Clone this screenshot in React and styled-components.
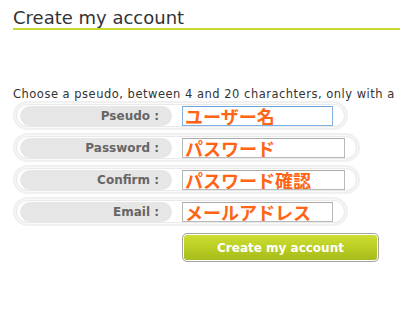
import React from "react";
import styled, { createGlobalStyle } from "styled-components";

const GlobalStyle = createGlobalStyle`
  html, body {
    margin: 0;
    padding: 0;
    background: #ffffff;
    overflow: hidden;
  }
  body {
    font-family: "DejaVu Sans", Verdana, sans-serif;
  }
`;

const Page = styled.div`
  width: 400px;
  height: 326px;
  padding: 7px 0 0 13px;
  box-sizing: border-box;
  overflow: hidden;
`;

const Title = styled.h1`
  margin: 0;
  font-size: 18px;
  line-height: 21px;
  font-weight: normal;
  color: #333333;
  border-bottom: 2px solid #c9da2a;
`;

const Hint = styled.p`
  margin: 57px 0 0 0;
  font-size: 11.5px;
  letter-spacing: 0.5px;
  line-height: 14px;
  color: #333333;
  white-space: nowrap;
  overflow: hidden;
`;

const Fields = styled.div`
  display: flex;
  flex-direction: column;
  align-items: flex-start;
  gap: 3px;
`;

const Row = styled.div`
  display: inline-flex;
  align-items: center;
  height: 29px;
  box-sizing: border-box;
  border: 2px solid #f0f0f0;
  box-shadow: inset 0 0 0 1px #fafafa, inset 0 0 0 2px #e9e9e9;
  border-radius: 15px;
  background: #ffffff;
  padding: 0 13px 0 5px;
  gap: 10px;
`;

const Label = styled.label`
  width: 152px;
  height: 20px;
  box-sizing: border-box;
  padding-right: 13px;
  border-radius: 10px;
  background: #e6e6e6;
  color: #666666;
  font-size: 12px;
  font-weight: bold;
  line-height: 20px;
  text-align: right;
`;

const Input = styled.input`
  width: ${p => p.width}px;
  height: 20px;
  box-sizing: border-box;
  margin: 0;
  padding: 0 2px;
  border: 1px solid ${p => (p.active ? "#7fb2e0" : "#b9b9b9")};
  border-top-color: ${p => (p.active ? "#6fa5d8" : "#a9a9a9")};
  background: #ffffff;
  color: #ff6414;
  font-family: "Noto Sans CJK JP", sans-serif;
  font-size: 18px;
  font-weight: bold;
  line-height: 18px;
  outline: none;
`;

const Submit = styled.button`
  margin: 7px 0 0 169px;
  width: 197px;
  height: 29px;
  border: 1px solid #a3a3a3;
  border-radius: 5px;
  box-shadow: inset 0 0 0 1px #ffffff;
  background: linear-gradient(#cfdf34, #b8cc22 55%, #a6ba1b);
  color: #ffffff;
  font-family: "DejaVu Sans", Verdana, sans-serif;
  font-size: 12px;
  font-weight: bold;
  cursor: pointer;
  padding: 0;
`;

const fields = [
  { label: "Pseudo :", value: "ユーザー名", width: 151, active: true },
  { label: "Password :", value: "パスワード", width: 163 },
  { label: "Confirm :", value: "パスワード確認", width: 163 },
  { label: "Email :", value: "メールアドレス", width: 151 }
];

function App() {
  return (
    <Page>
      <GlobalStyle />
      <Title>Create my account</Title>
      <Hint>Choose a pseudo, between 4 and 20 charachters, only with a</Hint>
      <Fields>
        {fields.map(f => (
          <Row key={f.label}>
            <Label>{f.label}</Label>
            <Input
              type="text"
              width={f.width}
              active={f.active}
              defaultValue={f.value}
            />
          </Row>
        ))}
      </Fields>
      <Submit type="submit">Create my account</Submit>
    </Page>
  );
}

export default App;
